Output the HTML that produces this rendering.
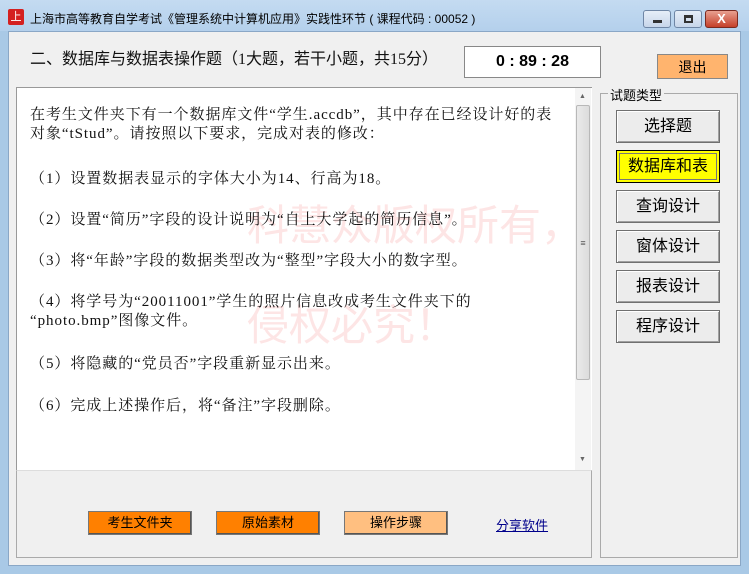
<!DOCTYPE html>
<html><head><meta charset="utf-8"><style>
*{margin:0;padding:0;box-sizing:border-box}
body{width:749px;height:574px;overflow:hidden;background:#a9c9e6;font-family:"Liberation Sans","Noto Sans CJK SC",sans-serif;position:relative}
.abs{position:absolute}
.title{left:0;top:0;width:749px;height:31px;background:linear-gradient(#c4dbf1,#b4d0ec)}
.client{left:8px;top:31px;width:733px;height:535px;background:#f0f0f0;border:1px solid #8aa7c6}
.btn{position:absolute;background:#ececec;border:1px solid #707070;box-shadow:inset 1px 1px 0 #fff,inset -1px -1px 0 #a0a0a0;font-size:16px;text-align:center;line-height:31px;color:#000}
.tb{position:absolute;top:10px;height:18px;border:1px solid #6f86a5;border-radius:3px;background:linear-gradient(#e6eef8,#c7d6ea)}
.txt{font-family:"Liberation Serif","Noto Serif CJK SC",serif;font-size:15px;letter-spacing:0.95px;color:#111;position:absolute;left:30px;white-space:nowrap}
.wm{position:absolute;color:#fde5e5;font-size:42px;font-family:"Noto Sans CJK SC",sans-serif;white-space:nowrap;letter-spacing:0}
.ob{position:absolute;top:511px;height:24px;width:104px;border:1px solid #777;box-shadow:inset -1px -1px 0 #555;font-size:13px;text-align:center;line-height:22px}
</style></head><body>
<div class="abs title"></div>
<div class="abs" style="left:8px;top:9px;width:16px;height:16px;background:#d42020;border-radius:2px;color:#fff;font-size:11px;line-height:16px;text-align:center">上</div>
<div class="abs" style="left:30px;top:10px;font-size:12px;color:#000">上海市高等教育自学考试《管理系统中计算机应用》实践性环节 ( 课程代码 : 00052 )</div>
<div class="tb" style="left:643px;width:28px"><div style="position:absolute;left:9px;top:9px;width:9px;height:3px;background:#333"></div></div>
<div class="tb" style="left:674px;width:28px"><div style="position:absolute;left:9px;top:4px;width:9px;height:8px;border:2px solid #333;border-top-width:3px"></div></div>
<div class="tb" style="left:705px;width:33px;background:linear-gradient(#e8a090,#c5402a);border-color:#7a2a20;color:#fff;font-size:13px;font-weight:bold;text-align:center;line-height:16px">X</div>
<div class="abs client"></div>
<div class="abs" style="left:30px;top:45px;font-size:16px;color:#111;font-family:'Liberation Serif','Noto Sans CJK SC',sans-serif">二、数据库与数据表操作题（1大题，若干小题，共15分）</div>
<div class="abs" style="left:464px;top:46px;width:137px;height:32px;background:#fff;border:1px solid #888;font-weight:bold;font-size:16px;text-align:center;line-height:30px">0 : 89 : 28</div>
<div class="abs" style="left:657px;top:54px;width:71px;height:25px;background:#ffb46e;border:1px solid #888;text-align:center;line-height:24px;font-size:14px">退出</div>
<div class="abs" style="left:16px;top:87px;width:576px;height:384px;background:#fff;border:1px solid #999;border-right:none"></div>
<div class="wm" style="left:247px;top:192px">科慧众版权所有，</div>
<div class="wm" style="left:247px;top:292px">侵权必究！</div>
<div class="txt" style="top:103px">在考生文件夹下有一个数据库文件“学生.accdb”，其中存在已经设计好的表</div>
<div class="txt" style="top:122px">对象“tStud”。请按照以下要求，完成对表的修改：</div>
<div class="txt" style="top:167px">（1）设置数据表显示的字体大小为14、行高为18。</div>
<div class="txt" style="top:208px">（2）设置“简历”字段的设计说明为“自上大学起的简历信息”。</div>
<div class="txt" style="top:249px">（3）将“年龄”字段的数据类型改为“整型”字段大小的数字型。</div>
<div class="txt" style="top:290px">（4）将学号为“20011001”学生的照片信息改成考生文件夹下的</div>
<div class="txt" style="top:309px">“photo.bmp”图像文件。</div>
<div class="txt" style="top:352px">（5）将隐藏的“党员否”字段重新显示出来。</div>
<div class="txt" style="top:394px">（6）完成上述操作后，将“备注”字段删除。</div>
<div class="abs" style="left:575px;top:88px;width:16px;height:382px;background:#f4f4f4"></div>
<div class="abs" style="left:576px;top:105px;width:14px;height:275px;background:linear-gradient(90deg,#eaeaea,#dcdcdc);border:1px solid #b8b8b8;border-radius:2px;font-size:9px;text-align:center;line-height:275px;color:#555">≡</div>
<div class="abs" style="left:579px;top:93px;font-size:7px;color:#666">▲</div>
<div class="abs" style="left:579px;top:456px;font-size:7px;color:#666">▼</div>
<div class="abs" style="left:16px;top:470px;width:576px;height:88px;border:1px solid #aaa;border-top:1px solid #ddd"></div>
<div class="ob" style="left:88px;background:#ff8000">考生文件夹</div>
<div class="ob" style="left:216px;background:#ff8000">原始素材</div>
<div class="ob" style="left:344px;background:#ffbf80">操作步骤</div>
<div class="abs" style="left:496px;top:515px;font-size:13px;color:#00008b;text-decoration:underline">分享软件</div>
<div class="abs" style="left:600px;top:93px;width:138px;height:465px;border:1px solid #aaa"></div>
<div class="abs" style="left:608px;top:85px;background:#f0f0f0;padding:0 2px;font-size:13px">试题类型</div>
<div class="btn" style="left:616px;top:110px;width:104px;height:33px">选择题</div>
<div class="btn" style="left:616px;top:150px;width:104px;height:33px;background:#ffff00;border:1px solid #000;box-shadow:inset 0 0 0 2px #ffff00,inset 0 0 0 3px #777">数据库和表</div>
<div class="btn" style="left:616px;top:190px;width:104px;height:33px">查询设计</div>
<div class="btn" style="left:616px;top:230px;width:104px;height:33px">窗体设计</div>
<div class="btn" style="left:616px;top:270px;width:104px;height:33px">报表设计</div>
<div class="btn" style="left:616px;top:310px;width:104px;height:33px">程序设计</div>
</body></html>
